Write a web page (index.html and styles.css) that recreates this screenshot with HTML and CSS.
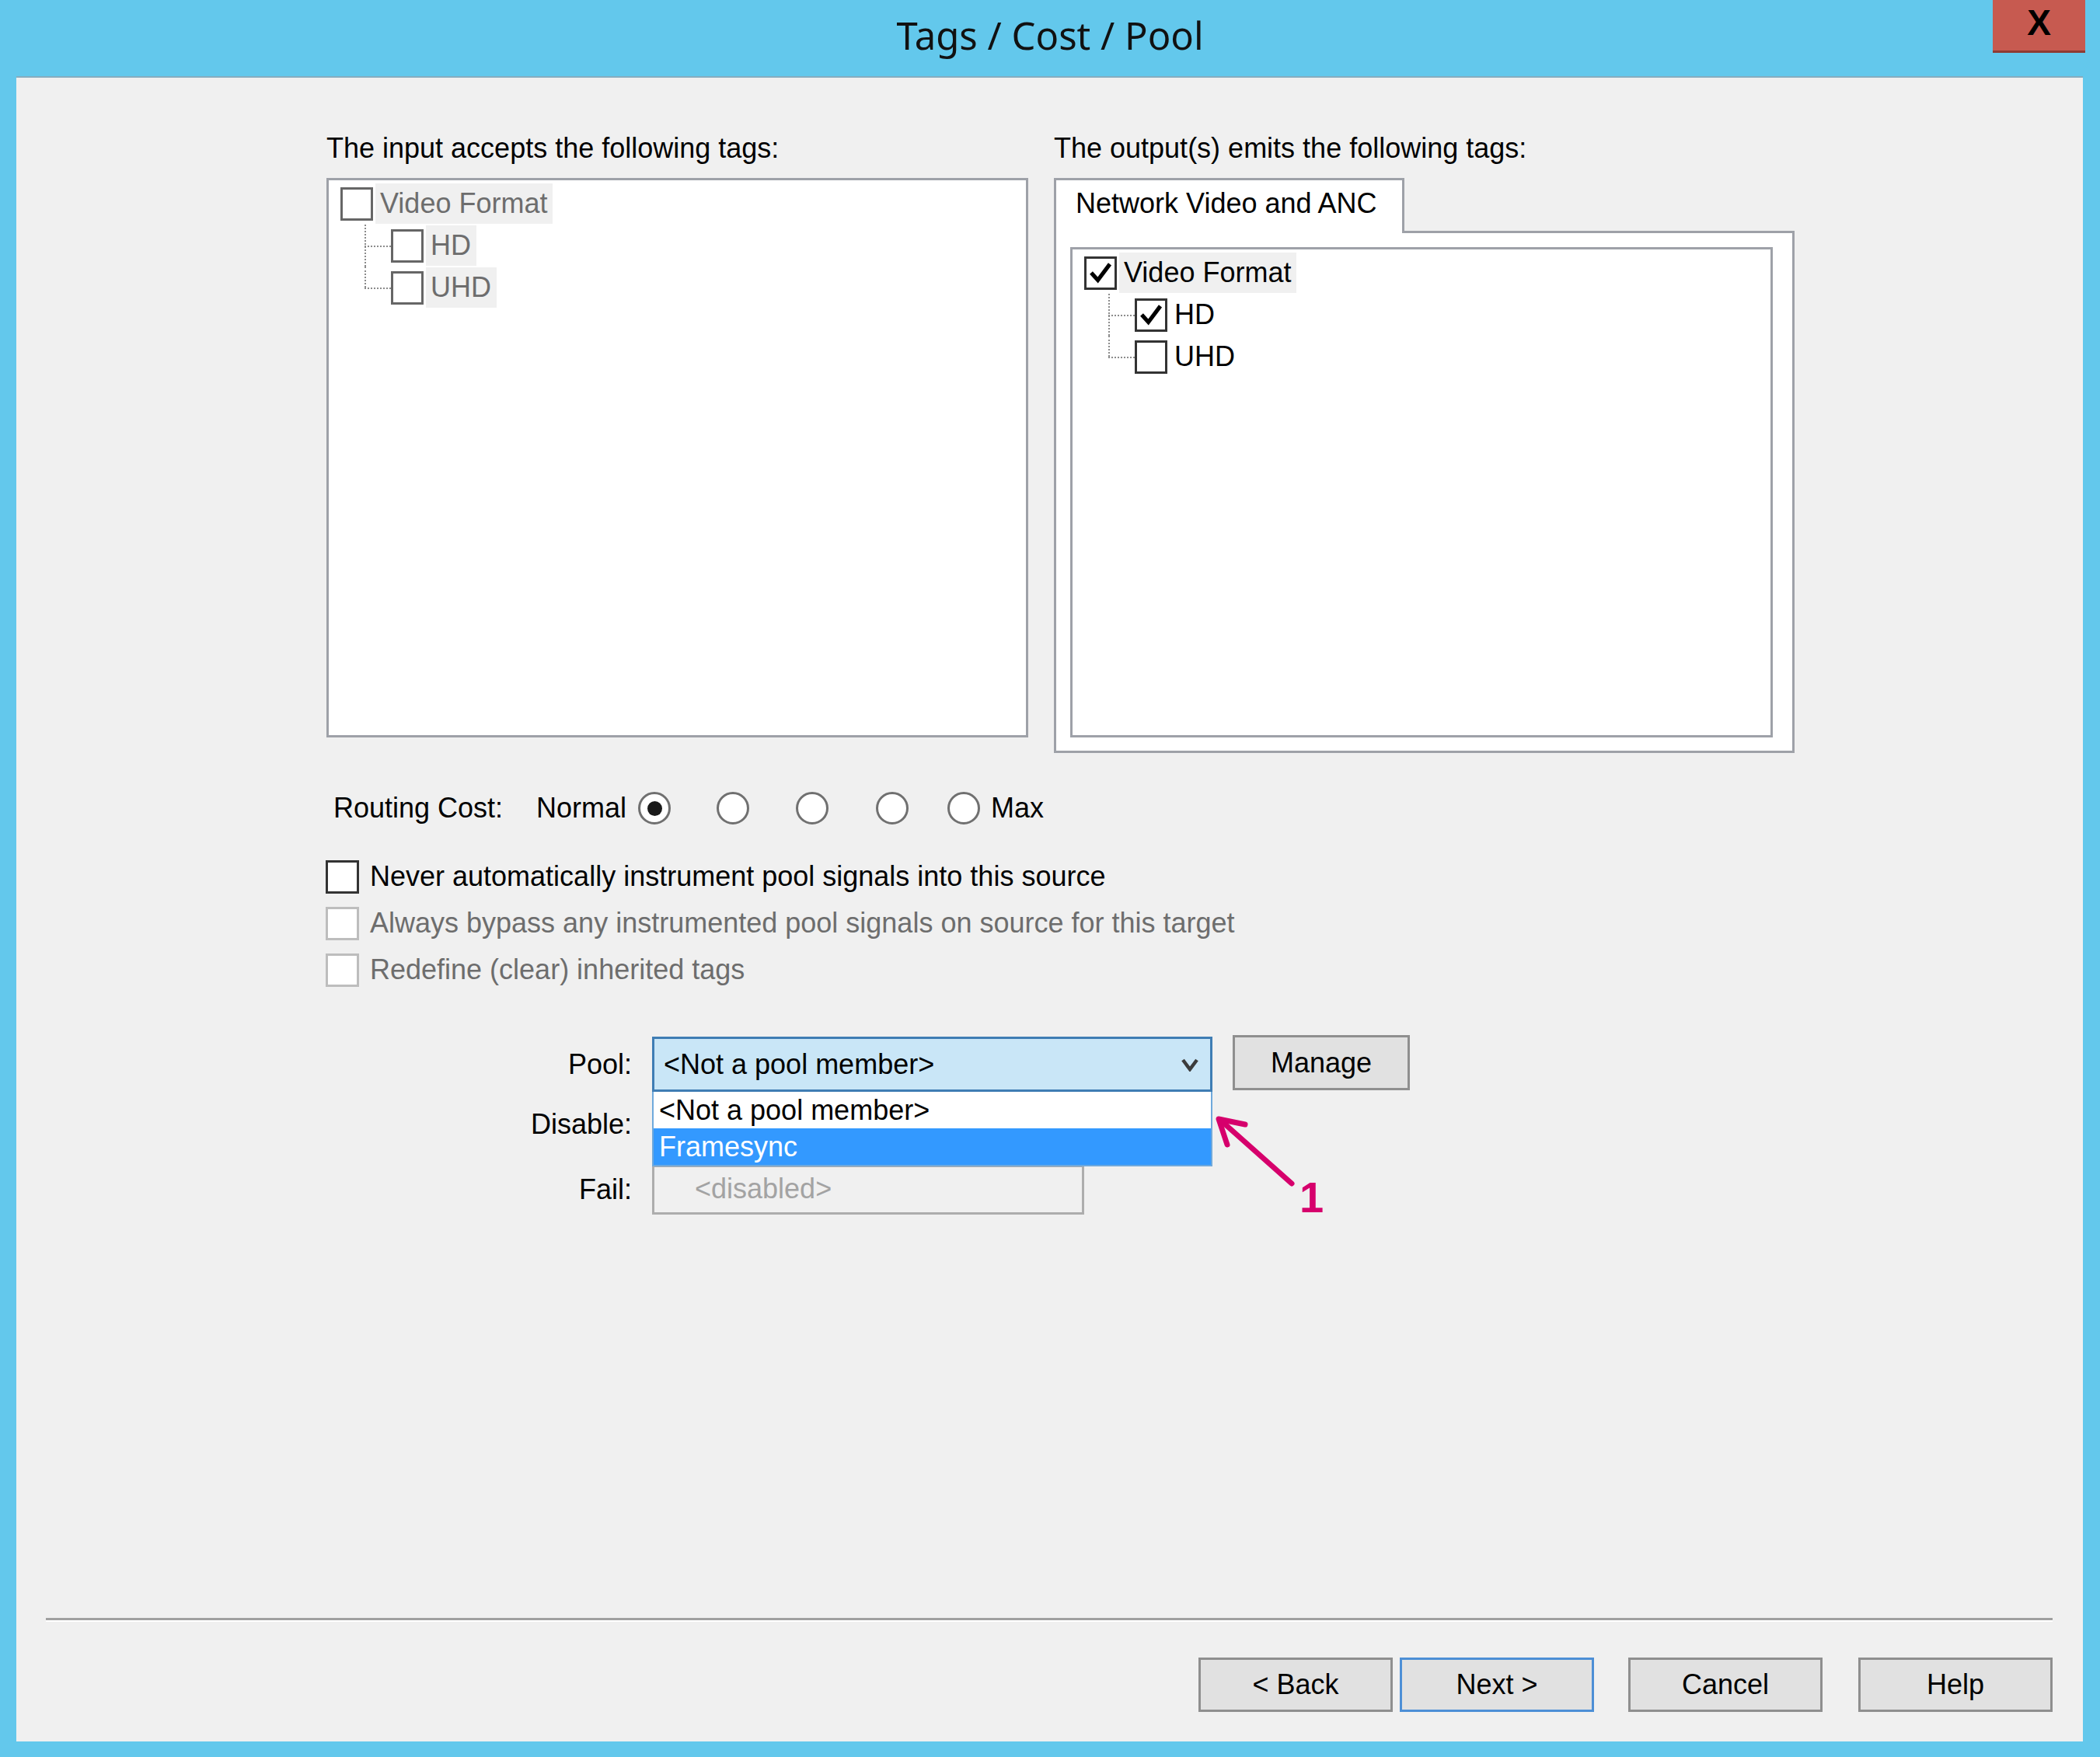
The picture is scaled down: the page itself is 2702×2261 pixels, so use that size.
FILE: index.html
```html
<!DOCTYPE html>
<html>
<head>
<meta charset="utf-8">
<title>Tags / Cost / Pool</title>
<link rel="stylesheet" href="styles.css">
</head>
<body>
<div class="window">
  <div class="titlebar">
    <div class="title">Tags / Cost / Pool</div>
    <div class="close">X</div>
  </div>
  <div class="frame">
    <div class="panel">
      <div class="content">
        <div class="tags">
          <div class="col col-in">
            <div class="label">The input accepts the following tags:</div>
            <div class="treebox treebox-in">
              <ul class="tree tree-disabled">
                <li class="row"><span class="cb"></span><span class="txt shade">Video Format</span></li>
                <li class="row child first"><span class="branch"></span><span class="cb"></span><span class="txt shade">HD</span></li>
                <li class="row child last"><span class="branch"></span><span class="cb"></span><span class="txt shade">UHD</span></li>
              </ul>
            </div>
          </div>
          <div class="col col-out">
            <div class="label">The output(s) emits the following tags:</div>
            <div class="tab">Network Video and ANC</div>
            <div class="tabpanel">
              <div class="treebox treebox-out">
                <ul class="tree">
                  <li class="row"><span class="cb"><svg class="tick" viewBox="0 0 42 42"><polyline points="7,21 17,32 35,8" /></svg></span><span class="txt shade">Video Format</span></li>
                  <li class="row child first"><span class="branch"></span><span class="cb"><svg class="tick" viewBox="0 0 42 42"><polyline points="7,21 17,32 35,8" /></svg></span><span class="txt">HD</span></li>
                  <li class="row child last"><span class="branch"></span><span class="cb"></span><span class="txt">UHD</span></li>
                </ul>
              </div>
            </div>
          </div>
        </div>

        <div class="routing">
          <span class="rc-label">Routing Cost:</span>
          <span class="rc-normal">Normal</span>
          <span class="radio on"></span>
          <span class="radio r2"></span>
          <span class="radio r3"></span>
          <span class="radio r4"></span>
          <span class="radio r5"></span>
          <span class="rc-max">Max</span>
        </div>

        <div class="checks">
          <div class="checkrow"><span class="cb cb-lg"></span><span class="ctext">Never automatically instrument pool signals into this source</span></div>
          <div class="checkrow off"><span class="cb cb-lg"></span><span class="ctext">Always bypass any instrumented pool signals on source for this target</span></div>
          <div class="checkrow off"><span class="cb cb-lg"></span><span class="ctext">Redefine (clear) inherited tags</span></div>
        </div>

        <div class="pool">
          <div class="plabel l-pool">Pool:</div>
          <div class="combo-wrap">
            <div class="combo">
              <span class="combo-text">&lt;Not a pool member&gt;</span>
              <svg class="chev" viewBox="0 0 24 18"><polyline points="3,3 12,15 21,3" /></svg>
            </div>
            <ul class="droplist">
              <li class="item">&lt;Not a pool member&gt;</li>
              <li class="item sel">Framesync</li>
            </ul>
          </div>
          <div class="btn manage">Manage</div>
          <div class="plabel l-disable">Disable:</div>
          <div class="plabel l-fail">Fail:</div>
          <div class="failbox">&lt;disabled&gt;</div>
        </div>
      </div>

      <div class="spacer"></div>
      <div class="separator"></div>
      <div class="buttons">
        <div class="btn b-back">&lt; Back</div>
        <div class="btn b-next">Next &gt;</div>
        <div class="btn b-cancel">Cancel</div>
        <div class="btn b-help">Help</div>
      </div>
    </div>
  </div>

  <svg class="annot" viewBox="0 0 2702 2261">
    <line x1="1662" y1="1523" x2="1572" y2="1443" />
    <polyline points="1602,1447 1568,1440 1579,1473" />
  </svg>
  <div class="annot-num">1</div>
</div>
</body>
</html>
```

FILE: styles.css
```css
html, body {
  margin: 0;
  padding: 0;
}

body {
  width: 2702px;
  height: 2261px;
  overflow: hidden;
  font-family: "Liberation Sans", Arial, sans-serif;
  font-size: 36px;
  line-height: 42px;
  color: #000;
}

.window {
  position: relative;
  width: 2702px;
  height: 2261px;
  background: #63c8ec;
  display: flex;
  flex-direction: column;
}

/* title bar */
.titlebar {
  height: 98px;
  flex: none;
  display: grid;
  grid-template-columns: 1fr auto 1fr;
  align-items: start;
}

.title {
  grid-column: 2;
  font-family: "Noto Sans", sans-serif;
  font-size: 49px;
  line-height: normal;
  padding-top: 12px;
  color: #111;
}

.close {
  grid-column: 3;
  justify-self: end;
  margin-right: 19px;
  width: 119px;
  height: 68px;
  box-sizing: border-box;
  background: #c75a50;
  border-bottom: 3px solid #8e3b33;
  display: flex;
  align-items: center;
  justify-content: center;
  padding-bottom: 8px;
  font-family: "Liberation Sans", Arial, sans-serif;
  font-weight: bold;
  font-size: 46px;
  line-height: 1;
  color: #000;
}

/* frame + panel */
.frame {
  flex: 1;
  display: flex;
  padding: 0 22px 20px 21px;
}

.panel {
  flex: 1;
  background: #f0f0f0;
  border-top: 2px solid #86adbf;
  display: flex;
  flex-direction: column;
  padding-bottom: 38px;
}

.content {
  padding: 70px 0 0 399px;
}

/* tags section */
.tags {
  display: flex;
  align-items: flex-start;
  gap: 33px;
}

.col {
  display: flex;
  flex-direction: column;
}

.col-in {
  width: 903px;
}

.col-out {
  width: 953px;
}

.label {
  height: 42px;
  margin-bottom: 17px;
  white-space: nowrap;
}

.treebox {
  box-sizing: border-box;
  background: #fff;
  border: 3px solid #9ea1a8;
}

.treebox-in {
  height: 720px;
}

.tab {
  width: 451px;
  height: 71px;
  box-sizing: border-box;
  background: #fff;
  border: 3px solid #9ea1a8;
  border-bottom: none;
  padding: 9px 0 0 25px;
  margin-bottom: -3px;
  position: relative;
  z-index: 1;
  white-space: nowrap;
}

.tabpanel {
  height: 672px;
  box-sizing: border-box;
  background: #fff;
  border: 3px solid #9ea1a8;
  padding: 18px 25px 0 18px;
}

.treebox-out {
  height: 631px;
}

.tree {
  list-style: none;
  margin: 0;
  padding: 3px 0 0 15px;
}

.row {
  height: 54px;
  display: flex;
  align-items: center;
}

.row.child {
  margin-left: 31px;
  align-items: stretch;
}

.row.child .cb,
.row.child .txt {
  align-self: center;
}

.branch {
  width: 34px;
  position: relative;
}

.branch::before {
  content: "";
  position: absolute;
  left: 0;
  top: 0;
  height: 100%;
  border-left: 2px dotted #8c8c8c;
}

.row.last .branch::before {
  height: 50%;
}

.branch::after {
  content: "";
  position: absolute;
  left: 0;
  top: 50%;
  width: 100%;
  border-top: 2px dotted #8c8c8c;
}

.cb {
  width: 42px;
  height: 43px;
  box-sizing: border-box;
  border: 3px solid #333;
  background: #fff;
  flex: none;
  display: flex;
  align-items: center;
  justify-content: center;
}

.tree-disabled .cb {
  border-color: #666;
}

.tick {
  width: 36px;
  height: 36px;
}

.tick polyline {
  fill: none;
  stroke: #000;
  stroke-width: 6;
  stroke-linejoin: miter;
}

.txt {
  height: 52px;
  line-height: 52px;
  margin-left: 3px;
  padding: 0 7px 0 6px;
  white-space: nowrap;
}

.txt.shade {
  background: #f0f0f0;
}

.tree-disabled .txt {
  color: #6d6d6d;
}

/* routing cost */
.routing {
  display: flex;
  align-items: center;
  height: 44px;
  margin: 49px 0 0 9px;
  white-space: nowrap;
}

.rc-label {
  width: 261px;
}

.rc-normal {
  width: 131px;
}

.radio {
  width: 42px;
  height: 42px;
  box-sizing: border-box;
  border: 3px solid #707070;
  border-radius: 50%;
  background: #fff;
  display: flex;
  align-items: center;
  justify-content: center;
  flex: none;
}

.radio.on::after {
  content: "";
  width: 19px;
  height: 19px;
  border-radius: 50%;
  background: #1a1a1a;
}

.radio.r2 { margin-left: 59px; }
.radio.r3 { margin-left: 60px; }
.radio.r4 { margin-left: 61px; }
.radio.r5 { margin-left: 50px; }

.rc-max {
  margin-left: 14px;
}

/* check rows */
.checks {
  margin: 36px 0 0 -1px;
}

.checkrow {
  height: 60px;
  display: flex;
  align-items: center;
}

.cb-lg {
  width: 43px;
  height: 43px;
}

.ctext {
  margin-left: 14px;
  white-space: nowrap;
}

.checkrow.off .cb {
  border-color: #bdbdbd;
}

.checkrow.off .ctext {
  color: #6d6d6d;
}

/* pool */
.pool {
  margin-top: 56px;
  display: grid;
  grid-template-columns: 393px 721px 228px;
  grid-template-rows: 71px 94px 64px;
  column-gap: 26px;
}

.plabel {
  justify-self: end;
  align-self: center;
  white-space: nowrap;
}

.l-pool { grid-column: 1; grid-row: 1; }
.l-disable { grid-column: 1; grid-row: 2; padding-bottom: 10px; }
.l-fail { grid-column: 1; grid-row: 3; }

.combo-wrap {
  grid-column: 2;
  grid-row: 1;
  position: relative;
  z-index: 2;
}

.combo {
  height: 71px;
  box-sizing: border-box;
  background: #c9e6f7;
  border: 3px solid #3f7db4;
  display: flex;
  align-items: center;
  padding: 0 14px 0 12px;
}

.combo-text {
  flex: 1;
  white-space: nowrap;
}

.chev {
  width: 24px;
  height: 18px;
}

.chev polyline {
  fill: none;
  stroke: #3c3c3c;
  stroke-width: 4.5;
}

.droplist {
  position: absolute;
  left: 0;
  top: 100%;
  width: 721px;
  box-sizing: border-box;
  margin: 0;
  padding: 0;
  list-style: none;
  border: 2px solid #6fa9dc;
  border-top: none;
  background: #fff;
}

.item {
  height: 47px;
  line-height: 47px;
  padding-left: 7px;
  white-space: nowrap;
}

.item.sel {
  background: #3399ff;
  color: #fff;
}

.btn.manage {
  grid-column: 3;
  grid-row: 1;
  align-self: start;
  margin-top: -2px;
  width: 228px;
  height: 71px;
}

.failbox {
  grid-column: 2;
  grid-row: 3;
  width: 556px;
  height: 64px;
  box-sizing: border-box;
  border: 3px solid #adadad;
  background: #f0f0f0;
  color: #a3a3a3;
  padding-left: 52px;
  line-height: 56px;
  white-space: nowrap;
}

/* bottom */
.spacer {
  flex: 1;
}

.separator {
  margin: 0 39px 0 38px;
  border-top: 3px solid #a0a0a0;
  border-bottom: 2px solid #fff;
}

.buttons {
  margin: 46px 39px 0 0;
  display: flex;
  justify-content: flex-end;
}

.btn {
  width: 250px;
  height: 70px;
  box-sizing: border-box;
  background: #e1e1e1;
  border: 3px solid #8f8f8f;
  display: flex;
  align-items: center;
  justify-content: center;
  white-space: nowrap;
}

.b-next {
  margin-left: 9px;
  border-color: #4d8fd6;
}

.b-cancel {
  margin-left: 44px;
}

.b-help {
  margin-left: 46px;
}

/* annotation overlay */
.annot {
  position: absolute;
  left: 0;
  top: 0;
  width: 2702px;
  height: 2261px;
  pointer-events: none;
}

.annot line,
.annot polyline {
  fill: none;
  stroke: #d6006c;
  stroke-width: 7;
  stroke-linecap: round;
  stroke-linejoin: round;
}

.annot-num {
  position: absolute;
  left: 1672px;
  top: 1513px;
  font-family: "Liberation Sans", Arial, sans-serif;
  font-weight: bold;
  font-size: 56px;
  line-height: 56px;
  color: #d6006c;
}
```
